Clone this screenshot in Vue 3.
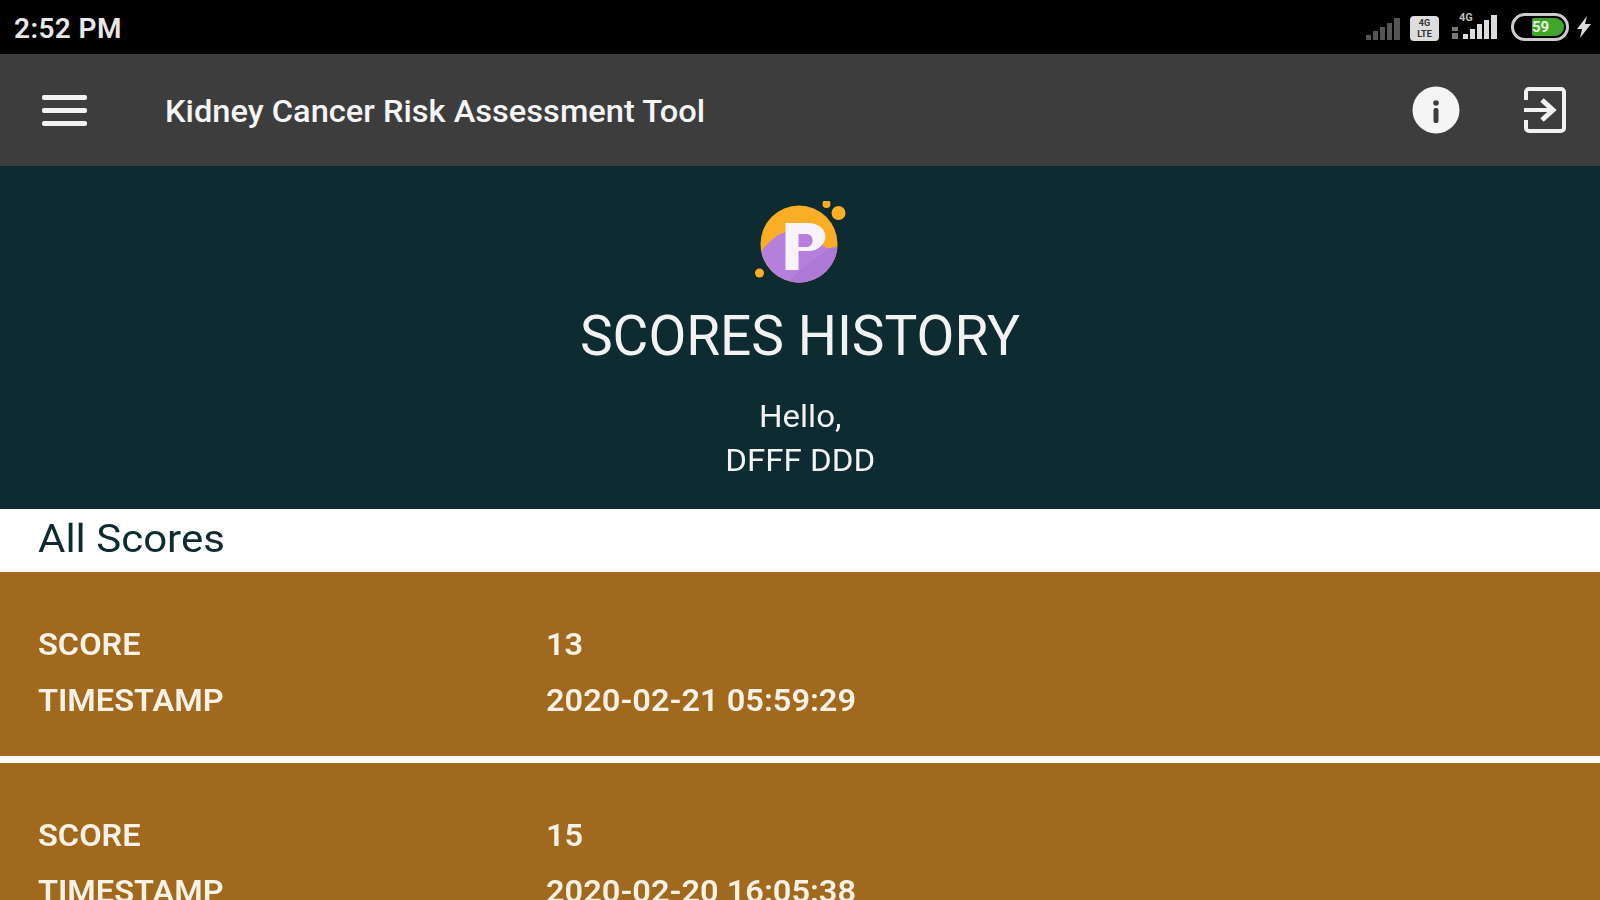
<script setup>
const scores = [
  { score: 13, timestamp: "2020-02-21 05:59:29" },
  { score: 15, timestamp: "2020-02-20 16:05:38" },
];
</script>

<template>
  <div class="screen">
    <div class="status-bar">
      <span class="clock">2:52 PM</span>
      <div class="status-icons">
        <svg width="36" height="24" viewBox="0 0 36 24" class="sig-dim">
          <rect x="1" y="18" width="5" height="5" />
          <rect x="8" y="14" width="5" height="9" />
          <rect x="15" y="10" width="5" height="13" />
          <rect x="22" y="6" width="5" height="17" />
          <rect x="29" y="1" width="6" height="22" />
        </svg>
        <span class="lte">4G<br />LTE</span>
        <div class="sig-main">
          <span class="four-g">4G</span>
          <svg width="48" height="28" viewBox="0 0 48 28">
            <rect x="1" y="20" width="6" height="6" fill="#777" />
            <rect x="1" y="14" width="6" height="4" fill="#777" />
            <rect x="12" y="21" width="5" height="5" fill="#ddd" />
            <rect x="19" y="16" width="5" height="10" fill="#ddd" />
            <rect x="26" y="11" width="5" height="15" fill="#ddd" />
            <rect x="33" y="7" width="5" height="19" fill="#ddd" />
            <rect x="40" y="2" width="6" height="24" fill="#ddd" />
          </svg>
        </div>
        <div class="battery">
          <div class="battery-fill">59</div>
        </div>
        <svg width="16" height="24" viewBox="0 0 16 24">
          <path d="M11 1 1 14h5l-2 9 11-14H9z" fill="#ddd" />
        </svg>
      </div>
    </div>

    <div class="toolbar">
      <button class="menu-btn" aria-label="Menu">
        <span></span><span></span><span></span>
      </button>
      <h1 class="app-title">Kidney Cancer Risk Assessment Tool</h1>
      <div class="toolbar-actions">
        <svg width="48" height="48" viewBox="0 0 48 48">
          <circle cx="24" cy="24" r="23.500" fill="#f5f5f5" />
          <circle cx="24" cy="17" r="2.800" fill="#3d3d3d" />
          <rect x="21.500" y="22" width="5" height="15" rx="2" fill="#3d3d3d" />
        </svg>
        <svg width="42" height="46" viewBox="0 0 42 46" fill="none" stroke="#f2f2f2" stroke-width="4">
          <path d="M2 13V5a3 3 0 0 1 3-3h32a3 3 0 0 1 3 3v36a3 3 0 0 1-3 3H5a3 3 0 0 1-3-3v-8" />
          <path d="M0 23h26" />
          <path d="M18 13l11 10-11 10" stroke-width="5" />
        </svg>
      </div>
    </div>

    <div class="hero">
      <svg class="logo" width="100" height="86" viewBox="0 0 100 86">
        <defs>
          <clipPath id="logo-disc"><circle cx="45" cy="43" r="38.500" /></clipPath>
        </defs>
        <circle cx="45" cy="43" r="38.500" fill="#f9ae26" />
        <path d="M4 54C14 42 22 33 32 31c12-3 24-3 30 3 4 6 6 12 12 13 4 0 8-1 12-2v41H4z" fill="#b67fdc" clip-path="url(#logo-disc)" />
        <path d="M46 69 76 47h10v39H30z" fill="#ae78d6" clip-path="url(#logo-disc)" />
        <path d="M31.500 22H54c11 0 17.500 7 17.500 13.500S65 50 54 50h-9.500v19h-13zm13 11v13h8c4 0 6-3 6-6.500S56.500 33 52.500 33z" fill="#f8f3fb" fill-rule="evenodd" />
        <circle cx="72.500" cy="3" r="4" fill="#f9ae26" />
        <circle cx="84.500" cy="12" r="7" fill="#f9ae26" />
        <circle cx="5.500" cy="72" r="4.500" fill="#f9ae26" />
      </svg>
      <h2 class="hero-title">SCORES HISTORY</h2>
      <p class="hello">Hello,<br />DFFF DDD</p>
    </div>

    <div class="section-title"><span>All Scores</span></div>

    <div class="score-list">
      <div v-for="item in scores" :key="item.timestamp" class="score-card">
        <div class="score-row">
          <span class="score-label">SCORE</span>
          <span class="score-value">{{ item.score }}</span>
        </div>
        <div class="score-row">
          <span class="score-label">TIMESTAMP</span>
          <span class="score-value">{{ item.timestamp }}</span>
        </div>
      </div>
    </div>
  </div>
</template>

<style>
html,
body {
  overflow: hidden;
  background: #fff;
}
</style>

<style scoped>
.screen {
  width: 1600px;
  height: 900px;
  overflow: hidden;
  font-family: Roboto, "Liberation Sans", sans-serif;
  filter: blur(0.5px);
}

.status-bar {
  height: 54px;
  background: #000;
  display: flex;
  align-items: center;
  justify-content: space-between;
  padding: 0 8px 0 14px;
  box-sizing: border-box;
}
.clock {
  color: #e8e8e8;
  font-size: 28px;
  font-weight: 600;
  letter-spacing: 0.4px;
  margin-top: 2px;
}
.status-icons {
  display: flex;
  align-items: center;
  gap: 7px;
}
.sig-dim {
  fill: #555;
  margin-top: 4px;
}
.lte {
  width: 29px;
  height: 25px;
  background: #ddd;
  border-radius: 4px;
  color: #333;
  font-size: 9px;
  line-height: 11px;
  text-align: center;
  font-weight: 700;
  box-sizing: border-box;
  padding-top: 2px;
  margin-top: 3px;
  margin-left: 2px;
  margin-right: 5px;
}
.sig-main {
  position: relative;
  height: 28px;
}
.four-g {
  position: absolute;
  left: 8px;
  top: -2px;
  color: #bbb;
  font-size: 11px;
  font-weight: 700;
}
.battery {
  width: 58px;
  height: 28px;
  border: 3px solid #ccc;
  border-radius: 14px;
  box-sizing: border-box;
  padding: 2px;
  display: flex;
  justify-content: flex-end;
  margin-left: 5px;
}
.battery-fill {
  width: 32px;
  background: #3fa62a;
  border-radius: 2px 10px 10px 2px;
  color: #e8f5e0;
  font-size: 15px;
  line-height: 18px;
  font-weight: 700;
}

.toolbar {
  height: 112px;
  background: #3d3d3d;
  display: flex;
  align-items: center;
  color: #fff;
}
.menu-btn {
  width: 45px;
  margin-left: 42px;
  padding: 0;
  border: none;
  background: none;
  display: flex;
  flex-direction: column;
  gap: 8px;
}
.menu-btn span {
  height: 5px;
  background: #f2f2f2;
  border-radius: 2px;
}
.app-title {
  margin: 2px 0 0 78px;
  font-size: 31px;
  font-weight: 500;
  color: #f5f5f5;
  transform: scaleX(1.052);
  transform-origin: left;
}
.toolbar-actions {
  margin-left: auto;
  margin-right: 34px;
  display: flex;
  align-items: center;
  gap: 64px;
}

.hero {
  height: 343px;
  background: #0d2b30;
  color: #f2f2f2;
  display: flex;
  flex-direction: column;
  align-items: center;
  box-sizing: border-box;
  padding-top: 35px;
}
.logo {
  margin-left: 7px;
}
.hero-title {
  margin: 17px 0 0;
  font-size: 55px;
  line-height: 64px;
  font-weight: 400;
}
.hello {
  margin: 27px 0 0;
  font-size: 31px;
  line-height: 44px;
  text-align: center;
  transform: scaleX(1.066);
}

.section-title {
  height: 63px;
  line-height: 60px;
  padding-left: 38px;
  background: #fff;
  color: #0d2b30;
  font-size: 38px;
}
.section-title span {
  display: inline-block;
  transform: scaleX(1.105);
  transform-origin: left;
}

.score-list {
  display: flex;
  flex-direction: column;
  gap: 7px;
}
.score-card {
  height: 184px;
  flex: none;
  background: #a0691e;
  color: #f7f1e6;
  font-size: 31px;
  font-weight: 600;
  box-sizing: border-box;
  padding: 44px 0 0 38px;
}
.score-row {
  display: flex;
  height: 56px;
  align-items: center;
}
.score-label {
  width: 508px;
}
.score-label,
.score-value {
  transform: scaleX(1.05);
  transform-origin: left;
}
</style>
